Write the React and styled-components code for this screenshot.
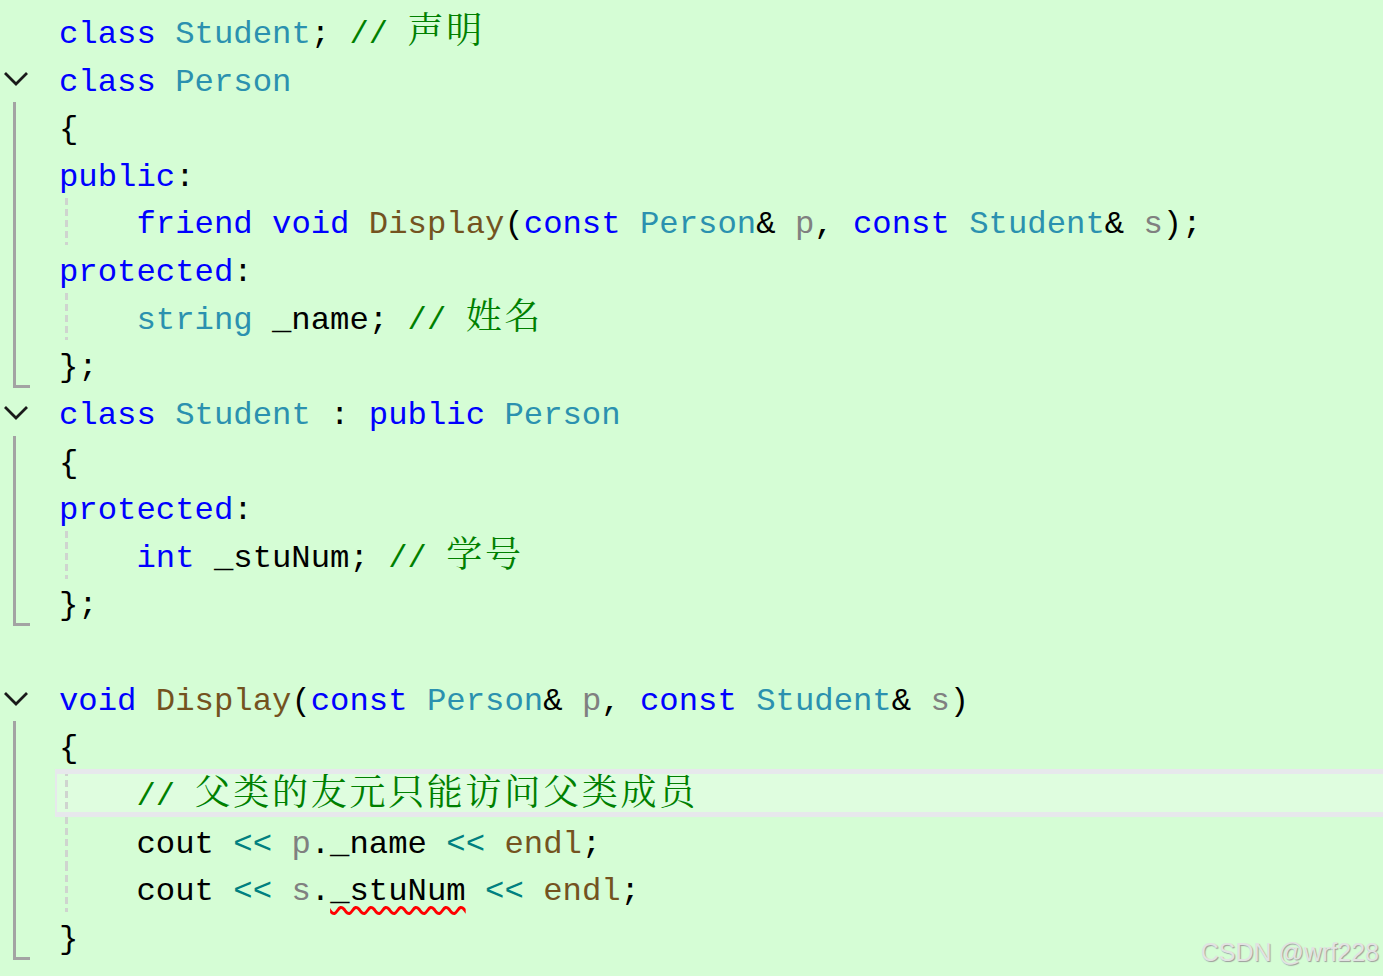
import React from 'react';
import styled, { createGlobalStyle } from 'styled-components';

const ROW = 47.63;
const CELL = 19.36;

const COLORS = {
  kw: '#0000ff',
  type: '#2b91af',
  fn: '#74531f',
  cm: '#008000',
  param: '#808080',
  op: '#008080',
  plain: '#000000',
};

// each line: fold marker, indent guide, tokens [text, kind]
const LINES = [
  { fold: null, tokens: [['class', 'kw'], [' '], ['Student', 'type'], ['; '], ['// 声明', 'cm']] },
  { fold: 'open', tokens: [['class', 'kw'], [' '], ['Person', 'type']] },
  { fold: 'mid', tokens: [['{']] },
  { fold: 'mid', tokens: [['public', 'kw'], [':']] },
  {
    fold: 'mid',
    guide: true,
    tokens: [
      ['    '], ['friend', 'kw'], [' '], ['void', 'kw'], [' '], ['Display', 'fn'], ['('],
      ['const', 'kw'], [' '], ['Person', 'type'], ['& '], ['p', 'param'], [', '],
      ['const', 'kw'], [' '], ['Student', 'type'], ['& '], ['s', 'param'], [');'],
    ],
  },
  { fold: 'mid', tokens: [['protected', 'kw'], [':']] },
  { fold: 'mid', guide: true, tokens: [['    '], ['string', 'type'], [' _name; '], ['// 姓名', 'cm']] },
  { fold: 'end', tokens: [['};']] },
  {
    fold: 'open',
    tokens: [['class', 'kw'], [' '], ['Student', 'type'], [' : '], ['public', 'kw'], [' '], ['Person', 'type']],
  },
  { fold: 'mid', tokens: [['{']] },
  { fold: 'mid', tokens: [['protected', 'kw'], [':']] },
  { fold: 'mid', guide: true, tokens: [['    '], ['int', 'kw'], [' _stuNum; '], ['// 学号', 'cm']] },
  { fold: 'end', tokens: [['};']] },
  { fold: null, tokens: [] },
  {
    fold: 'open',
    tokens: [
      ['void', 'kw'], [' '], ['Display', 'fn'], ['('], ['const', 'kw'], [' '], ['Person', 'type'], ['& '],
      ['p', 'param'], [', '], ['const', 'kw'], [' '], ['Student', 'type'], ['& '], ['s', 'param'], [')'],
    ],
  },
  { fold: 'mid', tokens: [['{']] },
  { fold: 'mid', guide: true, current: true, tokens: [['    '], ['// 父类的友元只能访问父类成员', 'cm']] },
  {
    fold: 'mid',
    guide: true,
    tokens: [['    cout '], ['<<', 'op'], [' '], ['p', 'param'], ['._name '], ['<<', 'op'], [' '], ['endl', 'fn'], [';']],
  },
  {
    fold: 'mid',
    guide: true,
    tokens: [
      ['    cout '], ['<<', 'op'], [' '], ['s', 'param'], ['.'], ['_stuNum', 'plain', true], [' '],
      ['<<', 'op'], [' '], ['endl', 'fn'], [';'],
    ],
  },
  { fold: 'end', tokens: [['}']] },
];

const GlobalStyle = createGlobalStyle`
  html, body {
    margin: 0;
    padding: 0;
    height: 100%;
    background: #d5fdd5;
    overflow: hidden;
  }
`;

const Editor = styled.div`
  position: relative;
  height: 976px;
  padding-top: 7px;
  box-sizing: border-box;
  background: #d5fdd5;
  font-family: "Liberation Mono", "DejaVu Sans Mono", monospace;
  font-size: 32.27px;
`;

const Line = styled.div`
  display: flex;
  height: ${ROW}px;
`;

const Gutter = styled.div`
  width: 55px;
  flex: none;
  display: flex;
  align-items: ${(p) => (p.$fold === 'open' ? 'center' : 'stretch')};
`;

const FoldLine = styled.div`
  margin-left: 13px;
  width: ${(p) => (p.$end ? '14px' : '0')};
  border-left: 3px solid #a3a3a3;
  border-bottom: ${(p) => (p.$end ? '3px solid #a3a3a3' : 'none')};
`;

const Chevron = styled.svg`
  margin-left: 2px;
  width: 28px;
  height: 18px;
`;

const Code = styled.div`
  flex: 1;
  box-sizing: border-box;
  padding: 3.9px 0 0 4px;
  line-height: ${ROW}px;
  white-space: pre;
  color: #000;
  background-color: ${(p) => (p.$current ? '#dffddf' : 'transparent')};
  background-image: ${(p) =>
    p.$guide ? 'repeating-linear-gradient(to bottom, #cfd4cf 0 7px, transparent 7px 11px)' : 'none'};
  background-size: 3px 100%;
  background-position: 10px 0;
  background-repeat: no-repeat;
  box-shadow: ${(p) =>
    p.$current ? 'inset 0 5px 0 #e7e8ec, inset 0 -5px 0 #e7e8ec, inset 2px 0 0 #e7e8ec' : 'none'};
`;

const Tok = styled.span`
  color: ${(p) => COLORS[p.$kind] || COLORS.plain};
  ${(p) =>
    p.$squiggle &&
    `
    text-decoration: underline wavy #ff0000;
    text-decoration-thickness: 2.6px;
    text-underline-offset: 6px;
  `}
`;

const Cjk = styled.span`
  font-family: "Noto Serif CJK SC", "Noto Sans CJK SC", sans-serif;
  font-size: 36px;
  letter-spacing: ${CELL * 2 - 36}px;
  line-height: 0;
`;

const Watermark = styled.div`
  position: absolute;
  right: 4px;
  bottom: 9px;
  font-family: "Liberation Sans", Arial, sans-serif;
  font-size: 25px;
  color: #e2e2e2;
  text-shadow: 1px 1px 1px #9c9c9c;
`;

function renderText(text) {
  const parts = text.split(/([\u4e00-\u9fff]+)/);
  return parts.map((part, i) =>
    /[\u4e00-\u9fff]/.test(part) ? <Cjk key={i}>{part}</Cjk> : part
  );
}

function Fold({ kind }) {
  if (kind === 'open') {
    return (
      <Chevron viewBox="0 0 28 18">
        <polyline points="3,4 14,15 25,4" fill="none" stroke="#1a1a1a" strokeWidth="2.8" />
      </Chevron>
    );
  }
  if (kind === 'mid' || kind === 'end') {
    return <FoldLine $end={kind === 'end'} />;
  }
  return null;
}

export default function App() {
  return (
    <>
      <GlobalStyle />
      <Editor>
        {LINES.map((line, i) => (
          <Line key={i}>
            <Gutter $fold={line.fold}>
              <Fold kind={line.fold} />
            </Gutter>
            <Code $guide={line.guide} $current={line.current}>
              {line.tokens.map(([text, kind, squiggle], j) => (
                <Tok key={j} $kind={kind} $squiggle={squiggle}>
                  {renderText(text)}
                </Tok>
              ))}
            </Code>
          </Line>
        ))}
        <Watermark>CSDN @wrf228</Watermark>
      </Editor>
    </>
  );
}
